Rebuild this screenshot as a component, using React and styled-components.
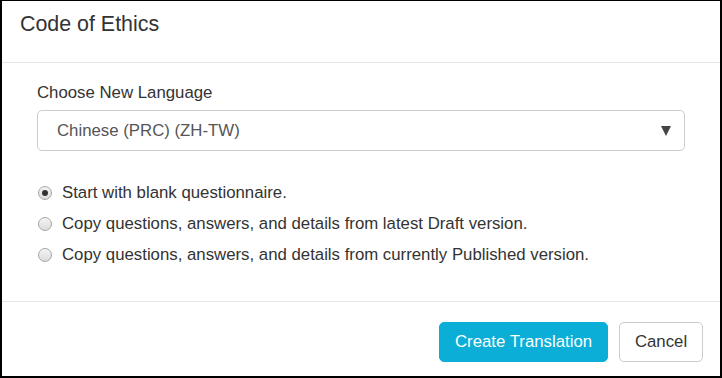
import React, { useState } from 'react';
import styled, { createGlobalStyle } from 'styled-components';

const GlobalStyle = createGlobalStyle`
    html, body {
        margin: 0;
        padding: 0;
        background: #fff;
    }
    * {
        box-sizing: border-box;
    }
`;

const Frame = styled.div`
    width: 722px;
    height: 378px;
    border-style: solid;
    border-color: #000;
    border-width: 1px 2px 2px 2px;
    background: #fff;
    display: flex;
    flex-direction: column;
    font-family: "Liberation Sans", Arial, sans-serif;
    font-size: 16.8px;
    color: #333;
`;

const Header = styled.div`
    height: 62px;
    padding: 8px 18px 0;
    border-bottom: 1px solid #e5e5e5;
`;

const Title = styled.h4`
    margin: 0;
    font-size: 21.4px;
    font-weight: normal;
    line-height: 30.6px;
    color: #333;
`;

const Body = styled.div`
    padding: 18px 35px 0 34px;
    height: 239px;
    border-bottom: 1px solid #e5e5e5;
`;

const Label = styled.label`
    display: block;
    line-height: 24px;
    margin-bottom: 5px;
    padding-left: 1px;
`;

const Select = styled.div`
    height: 41px;
    margin-left: 1px;
    border: 1px solid #ccc;
    border-radius: 5px;
    display: flex;
    align-items: center;
    justify-content: space-between;
    padding: 0 13px 0 19px;
    color: #555;
    margin-bottom: 26px;
`;

const Arrow = styled.span`
    width: 0;
    height: 0;
    border-left: 5px solid transparent;
    border-right: 5px solid transparent;
    border-top: 10px solid #444;
    margin-top: 1px;
`;

const Options = styled.div`
    display: flex;
    flex-direction: column;
`;

const Option = styled.label`
    display: flex;
    align-items: center;
    height: 31px;
    cursor: pointer;
    white-space: nowrap;
`;

const Radio = styled.span`
    flex: none;
    width: 14px;
    height: 14px;
    margin: 0 10px 0 2px;
    border-radius: 50%;
    border: 1px solid #a6a6a6;
    background: linear-gradient(#f4f4f4, #dcdcdc);
    display: flex;
    align-items: center;
    justify-content: center;
    &::after {
        content: "";
        width: 6px;
        height: 6px;
        border-radius: 50%;
        background: #333;
        display: ${p => (p.checked ? 'block' : 'none')};
    }
`;

const Footer = styled.div`
    flex: 1;
    display: flex;
    justify-content: flex-end;
    align-items: flex-start;
    gap: 11px;
    padding: 20px 17px 0 0;
`;

const Button = styled.button`
    height: 40px;
    padding: 0;
    white-space: nowrap;
    border-radius: 5px;
    font-family: inherit;
    font-size: 16.8px;
    border: 1px solid ${p => (p.$primary ? '#0aaed6' : '#ccc')};
    background: ${p => (p.$primary ? '#0aaed6' : '#fff')};
    color: ${p => (p.$primary ? '#fff' : '#333')};
    width: ${p => (p.$primary ? '169px' : '84px')};
`;

const choices = [
    'Start with blank questionnaire.',
    'Copy questions, answers, and details from latest Draft version.',
    'Copy questions, answers, and details from currently Published version.',
];

export default function App() {
    const [picked, setPicked] = useState(0);

    return (
        <>
            <GlobalStyle />
            <Frame>
                <Header>
                    <Title>Code of Ethics</Title>
                </Header>
                <Body>
                    <Label>Choose New Language</Label>
                    <Select>
                        <span>Chinese (PRC) (ZH-TW)</span>
                        <Arrow />
                    </Select>
                    <Options>
                        {choices.map((text, i) => (
                            <Option key={i} onClick={() => setPicked(i)}>
                                <Radio checked={picked === i} />
                                {text}
                            </Option>
                        ))}
                    </Options>
                </Body>
                <Footer>
                    <Button $primary>Create Translation</Button>
                    <Button>Cancel</Button>
                </Footer>
            </Frame>
        </>
    );
}
